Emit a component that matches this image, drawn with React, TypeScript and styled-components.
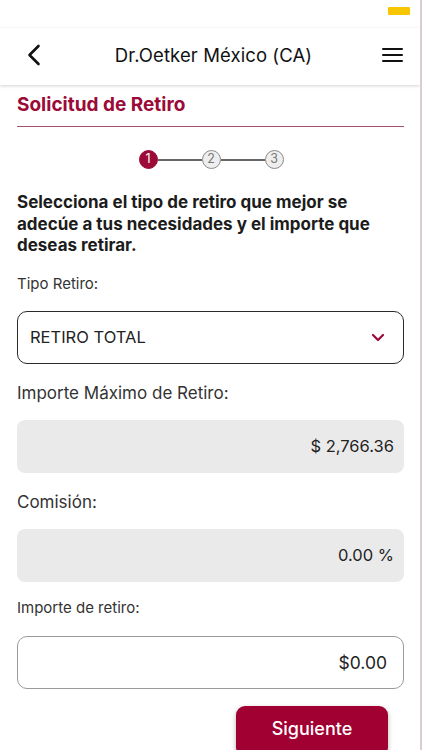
import React from "react";
import styled, { createGlobalStyle } from "styled-components";

const GlobalStyle = createGlobalStyle`
  html, body { margin: 0; padding: 0; background: #fff; }
  body { font-family: Inter, "Noto Sans", sans-serif; -webkit-font-smoothing: antialiased; }
  * { box-sizing: border-box; }
`;

const MAROON = "#9c0a37";

const Page = styled.div`
  width: 422px;
  height: 750px;
  overflow: hidden;
  background: #fff;
  border-right: 2px solid #d9cdd3;
  display: flex;
  flex-direction: column;
  & > * { flex-shrink: 0; }
`;

const StatusBar = styled.div`
  height: 28px;
  display: flex;
  justify-content: flex-end;
  padding: 7px 10px 0 0;
`;

const Battery = styled.div`
  width: 22px;
  height: 8px;
  border-radius: 1px;
  background: #f7c600;
`;

const Header = styled.header`
  height: 57px;
  display: flex;
  align-items: center;
  justify-content: space-between;
  padding: 0 15px 4px 22px;
  box-shadow: 0 1px 3px rgba(0, 0, 0, 0.18);
  position: relative;
  z-index: 1;
`;

const IconButton = styled.div`
  width: 24px;
  height: 24px;
  display: flex;
  align-items: center;
  justify-content: center;
`;

const Title = styled.h1`
  margin: 0;
  font-size: 18.5px;
  font-weight: 400;
  color: #111;
  letter-spacing: 0.1px;
`;

const Content = styled.main`
  padding: 8px 16px 0 17px;
  display: flex;
  flex-direction: column;
`;

const SectionTitle = styled.h2`
  margin: 0;
  font-size: 19px;
  font-weight: 700;
  color: ${MAROON};
  line-height: 24px;
  padding-bottom: 9px;
  border-bottom: 1.5px solid #a4506f;
`;

const Stepper = styled.div`
  display: flex;
  align-items: center;
  justify-content: center;
  margin: 23px 0 23px;
  padding-left: 1px;
`;

const StepDot = styled.div<{ $active?: boolean }>`
  width: 19px;
  height: 19px;
  border-radius: 50%;
  display: flex;
  align-items: center;
  justify-content: center;
  font-size: 12.5px;
  line-height: 1;
  color: ${(p) => (p.$active ? "#fff" : "#777")};
  background: ${(p) => (p.$active ? MAROON : "#eeeeee")};
  border: 1.5px solid ${(p) => (p.$active ? MAROON : "#8a8a8a")};
`;

const StepLine = styled.div`
  width: 44px;
  height: 2px;
  background: #666;
`;

const Intro = styled.p`
  margin: 0;
  font-size: 17px;
  font-weight: 700;
  line-height: 21.5px;
  color: #1c1c1c;
`;

const Label = styled.div<{ $size?: number }>`
  font-size: ${(p) => p.$size ?? 17}px;
  color: #333;
  line-height: 20px;
`;

const Field = styled.div<{ $variant: "select" | "readonly" | "input" }>`
  height: 53px;
  display: flex;
  align-items: center;
  border-radius: ${(p) => (p.$variant === "readonly" ? 8 : 10)}px;
  font-size: ${(p) => (p.$variant === "input" ? 17.5 : 16.5)}px;
  color: #222;
  background: ${(p) => (p.$variant === "readonly" ? "#ebeaeb" : "#fff")};
  border: ${(p) =>
    p.$variant === "select"
      ? "1.5px solid #2a2a2a"
      : p.$variant === "input"
      ? "1px solid #9a9a9a"
      : "none"};
  justify-content: ${(p) => (p.$variant === "select" ? "space-between" : "flex-end")};
  padding: ${(p) =>
    p.$variant === "select" ? "0 18px 0 12px" : p.$variant === "input" ? "0 16px 0 12px" : "0 10px 0 12px"};
`;

const FieldGroup = styled.div<{ $labelGap: number; $top: number }>`
  display: flex;
  flex-direction: column;
  gap: ${(p) => p.$labelGap}px;
  margin-top: ${(p) => p.$top}px;
`;

const ButtonRow = styled.div`
  display: flex;
  justify-content: flex-end;
  padding-right: 32px;
  margin-top: 17px;
`;

const PrimaryButton = styled.button`
  width: 152px;
  height: 50px;
  border: none;
  border-radius: 9px;
  background: #a10033;
  color: #fff;
  font-family: inherit;
  font-size: 18px;
  font-weight: 500;
  padding-bottom: 6px;
  box-shadow: 0 2px 5px rgba(0, 0, 0, 0.3);
`;

const ChevronLeft = () => (
  <svg width="14" height="22" viewBox="0 0 14 22" fill="none">
    <path d="M11.5 2 L2.5 11 L11.5 20" stroke="#111" strokeWidth="2.6" strokeLinecap="round" strokeLinejoin="round" />
  </svg>
);

const Hamburger = () => (
  <svg width="22" height="16" viewBox="0 0 22 16">
    <rect x="0" y="1" width="21" height="2" rx="1" fill="#111" />
    <rect x="0" y="7" width="21" height="2" rx="1" fill="#111" />
    <rect x="0" y="13" width="21" height="2" rx="1" fill="#111" />
  </svg>
);

const ChevronDown = () => (
  <svg width="14" height="9" viewBox="0 0 14 9" fill="none">
    <path d="M2 2 L7 7 L12 2" stroke={MAROON} strokeWidth="2.2" strokeLinecap="round" strokeLinejoin="round" />
  </svg>
);

export default function App() {
  return (
    <>
      <GlobalStyle />
      <Page>
        <StatusBar>
          <Battery />
        </StatusBar>
        <Header>
          <IconButton>
            <ChevronLeft />
          </IconButton>
          <Title>Dr.Oetker México (CA)</Title>
          <IconButton>
            <Hamburger />
          </IconButton>
        </Header>
        <Content>
          <SectionTitle>Solicitud de Retiro</SectionTitle>
          <Stepper>
            <StepDot $active>1</StepDot>
            <StepLine />
            <StepDot>2</StepDot>
            <StepLine />
            <StepDot>3</StepDot>
          </Stepper>
          <Intro>
            Selecciona el tipo de retiro que mejor se adecúe a tus necesidades y el importe que deseas retirar.
          </Intro>
          <FieldGroup $labelGap={17} $top={17}>
            <Label $size={15}>Tipo Retiro:</Label>
            <Field $variant="select">
              <span>RETIRO TOTAL</span>
              <ChevronDown />
            </Field>
          </FieldGroup>
          <FieldGroup $labelGap={17} $top={19}>
            <Label>Importe Máximo de Retiro:</Label>
            <Field $variant="readonly">$ 2,766.36</Field>
          </FieldGroup>
          <FieldGroup $labelGap={17} $top={19}>
            <Label>Comisión:</Label>
            <Field $variant="readonly">0.00 %</Field>
          </FieldGroup>
          <FieldGroup $labelGap={18} $top={16}>
            <Label $size={15}>Importe de retiro:</Label>
            <Field $variant="input">$0.00</Field>
          </FieldGroup>
        </Content>
        <ButtonRow>
          <PrimaryButton>Siguiente</PrimaryButton>
        </ButtonRow>
      </Page>
    </>
  );
}
